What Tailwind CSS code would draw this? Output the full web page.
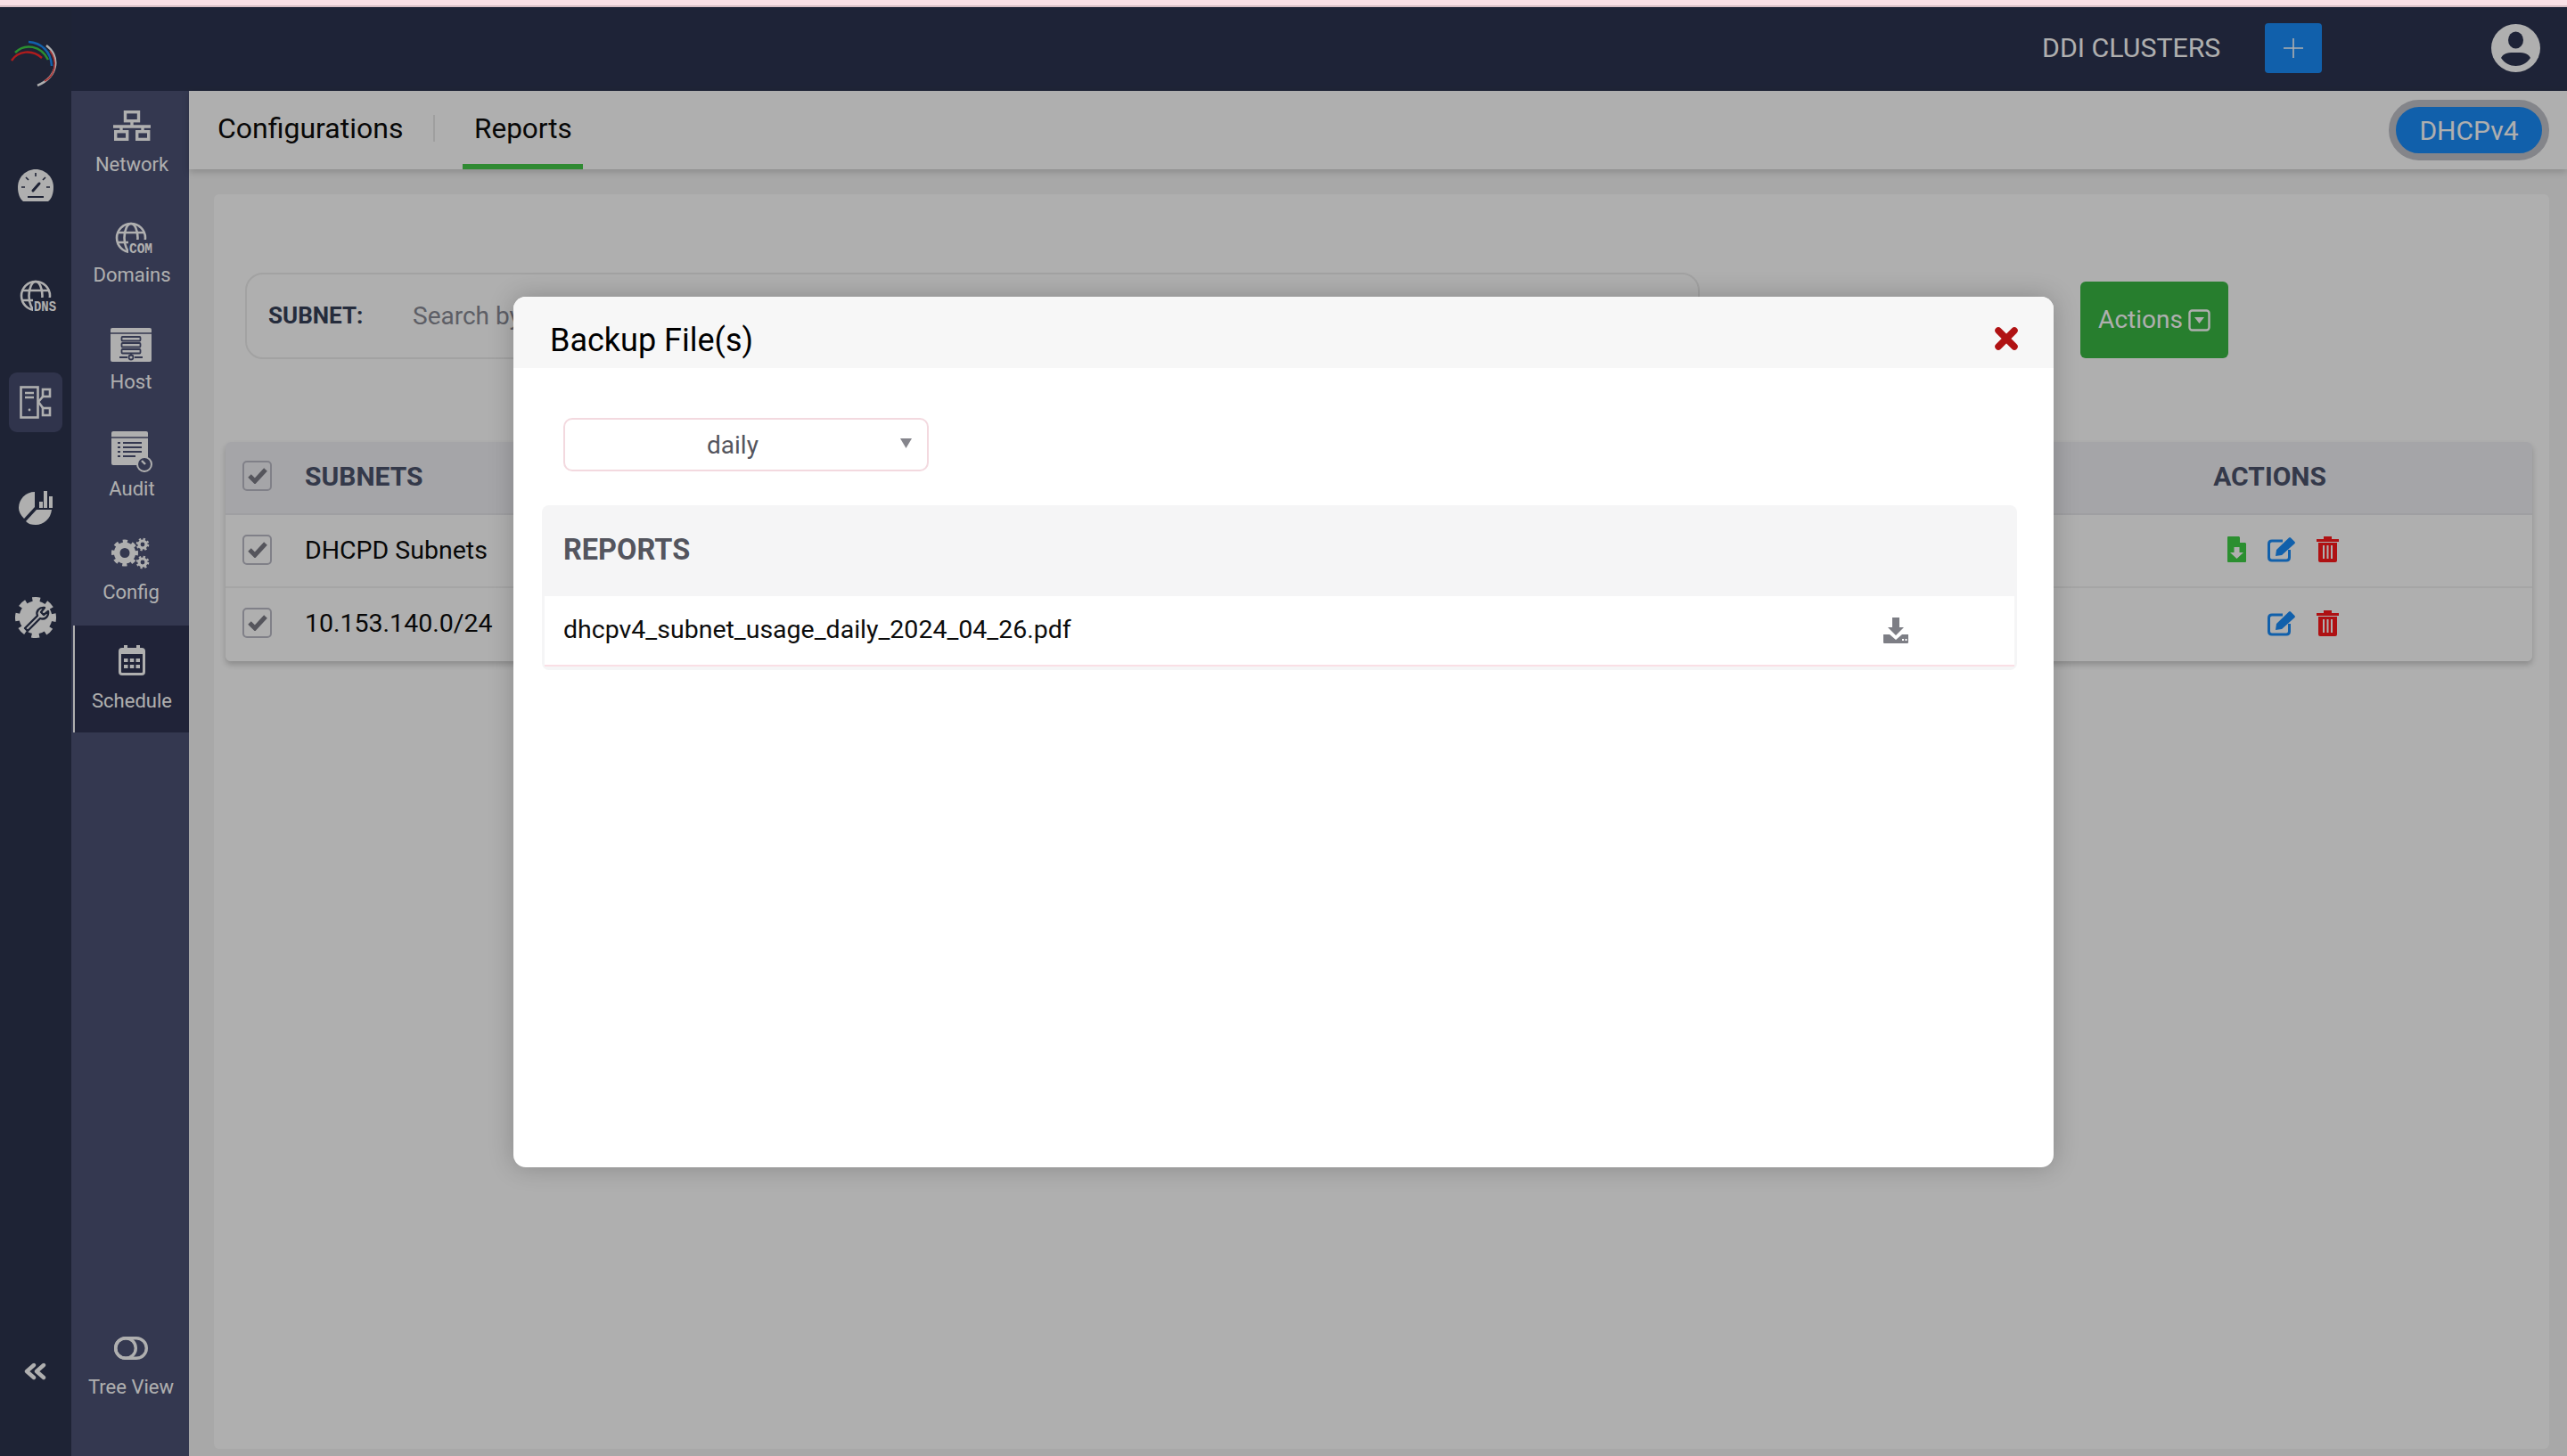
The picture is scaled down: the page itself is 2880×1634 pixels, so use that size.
<!DOCTYPE html>
<html lang="en">
<head>
<meta charset="utf-8">
<title>Backup Files</title>
<script src="https://cdn.jsdelivr.net/npm/@tailwindcss/browser@4"></script>
</head>
<body class="font-['Roboto',sans-serif]">
<div class="relative w-[2880px] h-[1634px] overflow-hidden flex flex-col bg-[#f5f5f5]">
  <div class="h-[8px] shrink-0 bg-[#fae1e6] border-b-2 border-[#d8bfc5]"></div>
  <div class="flex-1 flex min-h-0">
    <!-- Rail -->
    <aside class="w-[80px] shrink-0 bg-[#2c334e] flex flex-col items-center relative">
      <svg class="mt-[37px] ml-[-2px]" width="54" height="52" viewBox="0 0 54 52" fill="none" stroke-width="2.5">
        <path d="M1 23C8 12 24 10 35 20" stroke="#ff2a2a"/>
        <path d="M5 14C16 3 34 6 42 22" stroke="#3fd046"/>
        <path d="M20 2C34 3 45 12 46 29" stroke="#1a8cf9"/>
        <path d="M40 6C55 17 55 40 30 51" stroke="#ffffff"/>
        <path d="M44 12C53 24 50 40 38 46" stroke="#ff4a4a" stroke-width="1.5"/>
      </svg>
      <svg class="mt-[93px]" width="40" height="36" viewBox="0 0 40 36">
        <path d="M6 36C2 33 0 27 0 20 0 9 9 0 20 0s20 9 20 20c0 7-2 13-6 16z" fill="#fff"/>
        <path d="M20 4v4M9 9l3 3M31 9l-3 3M4 20h4M36 20h-4" stroke="#2c334e" stroke-width="1.6"/>
        <path d="M17 24l7-8" stroke="#2c334e" stroke-width="3" stroke-linecap="round"/>
        <path d="M11 31h18" stroke="#2c334e" stroke-width="2"/>
      </svg>
      <svg class="mt-[88px] ml-[12px]" width="48" height="42" viewBox="0 0 48 42" fill="none">
        <g stroke="#fff" stroke-width="2.6"><circle cx="18" cy="18" r="16"/><ellipse cx="18" cy="18" rx="7.5" ry="16"/><path d="M3 12h30M3 23h30"/></g>
        <rect x="15" y="20" width="29" height="16" fill="#2c334e"/>
        <text x="16" y="35" font-family="'Liberation Mono',monospace" font-weight="700" font-size="17" textLength="25" lengthAdjust="spacingAndGlyphs" fill="#fff">DNS</text>
      </svg>
      <div class="mt-[62px] w-[60px] h-[67px] rounded-[9px] bg-[#464c6f] flex items-center justify-center">
        <svg width="36" height="37" viewBox="0 0 36 37" fill="none" stroke="#fff" stroke-width="2.6">
          <rect x="1.5" y="1.5" width="19" height="34"/>
          <path d="M6 8h10M6 13h10" stroke-width="2.4"/>
          <circle cx="11" cy="27" r="1.4" fill="#fff" stroke="none"/>
          <rect x="26" y="4" width="8" height="8"/>
          <rect x="26" y="25" width="8" height="8"/>
          <path d="M21 18l6-7M21 18l6 8"/>
        </svg>
      </div>
      <svg class="mt-[66px]" width="38" height="38" viewBox="0 0 38 38">
        <path d="M18 1v17L6 31C2 27 0 23 0 19 0 9 8 1 18 1z" fill="#fff"/>
        <path d="M20 21h17c-1 10-9 17-18 17-5 0-8-1-11-4z" fill="#fff"/>
        <path d="M23 12h4v7h-4zM28 0h4v19h-4zM34 6h4v13h-4z" fill="#fff"/>
      </svg>
      <svg class="mt-[81px]" width="46" height="46" viewBox="0 0 46 46">
        <circle cx="23" cy="23" r="18.5" fill="#fff"/>
        <circle cx="23" cy="23" r="20" fill="none" stroke="#fff" stroke-width="6" stroke-dasharray="8.4 7.3" transform="rotate(-11.8 23 23)"/>
        <path d="M11 35l14-14c-2-5 2-10 8-9l-4 5 3 3 5-4c1 6-4 10-9 8L14 38z" fill="none" stroke="#2c334e" stroke-width="2.4" stroke-linejoin="round"/>
      </svg>
      <svg class="absolute left-[27px] top-[1521px]" width="25" height="20" viewBox="0 0 25 20" fill="none" stroke="#fff" stroke-width="4.4" stroke-linecap="round" stroke-linejoin="round">
        <path d="M11 3L3 10l8 7M22 3l-8 7 8 7"/>
      </svg>
    </aside>
    <div class="flex-1 min-w-0 flex flex-col">
      <!-- Header -->
      <header class="h-[94px] shrink-0 bg-[#2d3450] flex items-center text-white">
        <span class="ml-[2211px] mt-[-2px] w-[199px] text-[30.3px] leading-[40px] whitespace-nowrap">DDI CLUSTERS</span>
        <button class="ml-[51px] w-[64px] h-[56px] rounded-[4px] bg-[#1a8cf9] flex items-center justify-center mt-[-2px]">
          <svg width="22" height="22" viewBox="0 0 22 22" stroke="#fff" stroke-width="1.6"><path d="M11 0v22M0 11h22"/></svg>
        </button>
        <svg class="ml-[190px] mt-[-2px]" width="55" height="54" viewBox="0 0 55 54">
          <ellipse cx="27.5" cy="27" rx="27.5" ry="27" fill="#fff"/>
          <ellipse cx="27.5" cy="18" rx="8.5" ry="9.5" fill="#2d3450"/>
          <path d="M11 38c3-6 9-6 16.5-6S41 32 44 38c-4 6-10 9-16.5 9S15 44 11 38z" fill="#2d3450"/>
        </svg>
      </header>
      <div class="flex-1 flex min-h-0">
        <!-- Sidebar -->
        <nav class="w-[132px] shrink-0 bg-[#4c5275] flex flex-col text-white text-[22px] leading-[28px]">
          <a class="h-[130px] pt-[22px] pl-[4px] flex flex-col items-center">
            <svg width="42" height="34" viewBox="0 0 42 34" fill="none" stroke="#fff" stroke-width="3.4">
              <rect x="13.5" y="1.7" width="15" height="10"/>
              <path d="M21 12v6M0 18h42M9 18v5M33 18v5"/>
              <rect x="2.7" y="23.7" width="13" height="8.7"/>
              <rect x="26.7" y="23.7" width="13" height="8.7"/>
            </svg>
            <span class="mt-[13px]">Network</span>
          </a>
          <a class="h-[120px] pt-[17px] pl-[4px] flex flex-col items-center">
            <svg class="ml-[10px]" width="48" height="42" viewBox="0 0 48 42" fill="none">
              <g stroke="#fff" stroke-width="2.6"><circle cx="18" cy="18" r="16"/><ellipse cx="18" cy="18" rx="7.5" ry="16"/><path d="M3 12h30M3 23h30"/></g>
              <rect x="15" y="20" width="29" height="16" fill="#4c5275"/>
              <text x="16" y="35" font-family="'Liberation Mono',monospace" font-weight="700" font-size="17" textLength="26" lengthAdjust="spacingAndGlyphs" fill="#fff">COM</text>
            </svg>
            <span class="mt-[4px]">Domains</span>
          </a>
          <a class="h-[118px] pt-[16px] pl-[4px] flex flex-col items-center">
            <svg class="ml-[-2px]" width="46" height="38" viewBox="0 0 46 38">
              <rect width="46" height="38" rx="2" fill="#fff"/>
              <path d="M0 6h46" stroke="#4c5275" stroke-width="1.6"/>
              <g fill="none" stroke="#4c5275" stroke-width="1.8">
                <rect x="12.5" y="10" width="21" height="4.5" rx="1"/>
                <rect x="12.5" y="17" width="21" height="4.5" rx="1"/>
                <rect x="12.5" y="24" width="21" height="4.5" rx="1"/>
                <path d="M23 28.5v3M10 33h9M27 33h9"/>
                <circle cx="23" cy="33" r="2.5"/>
              </g>
            </svg>
            <span class="mt-[9px] ml-[-2px]">Host</span>
          </a>
          <a class="h-[115px] pt-[14px] pl-[4px] flex flex-col items-center">
            <svg width="46" height="46" viewBox="0 0 46 46">
              <rect width="41" height="38" rx="2" fill="#fff"/>
              <path d="M0 7h41" stroke="#4c5275" stroke-width="1.6"/>
              <path d="M7 13h3M13 13h21M7 18h3M13 18h21M7 23h3M13 23h21M7 28h3M13 28h14" stroke="#4c5275" stroke-width="1.8"/>
              <circle cx="37" cy="37" r="8" fill="#4c5275" stroke="#fff" stroke-width="2"/>
              <path d="M34 33l4 4" stroke="#fff" stroke-width="2.4"/>
            </svg>
            <span class="mt-[5px]">Audit</span>
          </a>
          <a class="h-[117px] pt-[18px] pl-[4px] flex flex-col items-center">
            <svg class="ml-[-3px]" width="43" height="36" viewBox="0 0 43 36">
              <circle cx="15" cy="17.5" r="8.8" fill="none" stroke="#fff" stroke-width="6.6"/>
              <circle cx="15" cy="17.5" r="13" fill="none" stroke="#fff" stroke-width="4" stroke-dasharray="5.1 5.1" transform="rotate(-11 15 17.5)"/>
              <circle cx="35" cy="8" r="4" fill="none" stroke="#fff" stroke-width="3.2"/>
              <circle cx="35" cy="8" r="6" fill="none" stroke="#fff" stroke-width="2.6" stroke-dasharray="2.3 2.4"/>
              <circle cx="35" cy="28" r="4" fill="none" stroke="#fff" stroke-width="3.2"/>
              <circle cx="35" cy="28" r="6" fill="none" stroke="#fff" stroke-width="2.6" stroke-dasharray="2.3 2.4"/>
            </svg>
            <span class="mt-[12px] ml-[-2px]">Config</span>
          </a>
          <a class="h-[120px] ml-[2px] pt-[22px] flex flex-col items-center bg-[#2f3452] border-l-2 border-white">
            <svg width="30" height="34" viewBox="0 0 30 34">
              <rect x="1.5" y="4.5" width="27" height="28" rx="2.5" fill="none" stroke="#fff" stroke-width="3"/>
              <path d="M1.5 5h27v5h-27zM6 0h4v6H6zM20 0h4v6h-4z" fill="#fff"/>
              <path d="M6 15h4.5v4H6zM12.8 15h4.5v4h-4.5zM19.5 15H24v4h-4.5zM6 22h4.5v4H6zM12.8 22h4.5v4h-4.5zM19.5 22H24v4h-4.5z" fill="#fff"/>
            </svg>
            <span class="mt-[15px]">Schedule</span>
          </a>
          <a class="mt-auto pb-[63px] pl-[2px] flex flex-col items-center">
            <svg width="38" height="26" viewBox="0 0 38 26" fill="none" stroke="#fff" stroke-width="3.4">
              <rect x="1.7" y="1.7" width="34.6" height="22.6" rx="11.3"/>
              <circle cx="13" cy="13" r="11.3"/>
            </svg>
            <span class="mt-[17px] whitespace-nowrap">Tree View</span>
          </a>
        </nav>
        <!-- Main -->
        <main class="flex-1 min-w-0 flex flex-col">
          <div class="h-[88px] shrink-0 bg-white flex items-center shadow-[0_3px_8px_rgba(0,0,0,0.18)] relative text-[#0c0c0c] text-[32px]">
            <span class="ml-[32px] mt-[-5px]">Configurations</span>
            <span class="ml-[34px] w-[2px] h-[30px] bg-[#e8e8e8] mt-[-5px]"></span>
            <div class="ml-[31px] w-[135px] h-full border-b-[6px] border-[#45c94a] flex items-center justify-center"><span class="mt-[4px] text-[31.5px]">Reports</span></div>
            <div class="ml-auto mr-[20px] w-[180px] h-[68px] rounded-full border-8 border-[#c0c2c9] bg-[#1a8cf9] flex items-center justify-center text-white text-[30px]">DHCPv4</div>
          </div>
          <div class="flex-1 min-h-0 pt-[28px] pl-[28px] pr-[20px] pb-[8px]">
            <div class="h-full bg-white rounded-[6px] pt-[88px]">
              <div class="flex items-start pl-[35px]">
                <div class="w-[1632px] h-[97px] rounded-[20px] border-2 border-[#ececec] flex items-center pl-[24px]">
                  <span class="w-[162px] text-[26px] font-bold text-[#364058]">SUBNET:</span>
                  <span class="text-[28px] text-[#888a94]">Search by</span>
                </div>
                <button class="ml-[427px] mt-[10px] w-[166px] h-[86px] rounded-[6px] bg-[#3ab843] text-white text-[28px] flex items-center justify-center gap-[6px]">
                  Actions
                  <svg width="25" height="25" viewBox="0 0 25 25" fill="none"><rect x="1.5" y="1.5" width="22" height="22" rx="3" stroke="#fff" stroke-width="2.4"/><path d="M7 9h11l-5.5 7z" fill="#fff"/></svg>
                </button>
              </div>
              <div class="mt-[93px] ml-[13px] mr-[19px] rounded-[6px] shadow-[0_4px_6px_rgba(0,0,0,0.2)]">
                <div class="h-[82px] bg-[#f0f0f5] rounded-t-[6px] border-b-2 border-[#e8e8ec] flex items-center pl-[19px] pr-[231px] justify-between">
                  <div class="flex items-center text-[#4d546d] font-bold text-[30px]">
                    <span class="mt-[-4px] w-[33px] h-[34px] rounded-[5px] border-2 border-[#bbbbc6] flex items-center justify-center">
                      <svg width="22" height="18" viewBox="0 0 22 18" fill="none" stroke="#7c7c86" stroke-width="5"><path d="M2 9l6 6L20 2"/></svg>
                    </span>
                    <span class="ml-[37px] mt-[-3px]">SUBNETS</span>
                  </div>
                  <span class="text-[#4d546d] font-bold text-[30px] mt-[-3px]">ACTIONS</span>
                </div>
                <div class="h-[82px] bg-white border-b-2 border-[#f0f0f0] flex items-center justify-between pl-[19px] pr-[217px]">
                  <div class="flex items-center text-[#0c0c0c] text-[28.5px]">
                    <span class="mt-[-3px] w-[33px] h-[34px] rounded-[5px] border-2 border-[#bbbbc6] flex items-center justify-center">
                      <svg width="22" height="18" viewBox="0 0 22 18" fill="none" stroke="#7c7c86" stroke-width="5"><path d="M2 9l6 6L20 2"/></svg>
                    </span>
                    <span class="ml-[37px]">DHCPD Subnets</span>
                  </div>
                  <div class="flex items-center mt-[-3px]">
                    <svg width="21" height="29" viewBox="0 0 21 29"><path d="M0 1q0-1 1-1h12l8 8v20q0 1-1 1H1q-1 0-1-1z" fill="#3fd046"/><path d="M14 0l7 7h-7z" fill="#fff"/><path d="M7.5 12h6v6H18l-7.5 7L3 18h4.5z" fill="#fff"/></svg>
                    <svg class="ml-[24px]" width="32" height="29" viewBox="0 0 32 29"><path d="M17 5H5q-3.5 0-3.5 3.5v15Q1.5 27 5 27h16q3.5 0 3.5-3.5V15" fill="none" stroke="#1a8cf9" stroke-width="3"/><path d="M9 22l1-7L24 1.5q1-1 2 0l4.5 4.500q1 1 0 2L16 21z" fill="#1a8cf9"/></svg>
                    <svg class="ml-[23px]" width="25" height="29" viewBox="0 0 25 29"><path d="M0 3h8V0h9v3h8v3H0z" fill="#ff1a1c"/><path d="M2 7h21v20q0 2-2 2H4q-2 0-2-2zM7 10v15h2V10zM11.5 10v15h2V10zM16 10v15h2V10z" fill="#ff1a1c" fill-rule="evenodd"/></svg>
                  </div>
                </div>
                <div class="h-[82px] bg-white rounded-b-[6px] flex items-center justify-between pl-[19px] pr-[217px]">
                  <div class="flex items-center text-[#0c0c0c] text-[28.5px]">
                    <span class="mt-[-4px] w-[33px] h-[34px] rounded-[5px] border-2 border-[#bbbbc6] flex items-center justify-center">
                      <svg width="22" height="18" viewBox="0 0 22 18" fill="none" stroke="#7c7c86" stroke-width="5"><path d="M2 9l6 6L20 2"/></svg>
                    </span>
                    <span class="ml-[37px] mt-[-1px]">10.153.140.0/24</span>
                  </div>
                  <div class="flex items-center mt-[-4px]">
                    <svg width="32" height="29" viewBox="0 0 32 29"><path d="M17 5H5q-3.5 0-3.5 3.5v15Q1.5 27 5 27h16q3.5 0 3.5-3.5V15" fill="none" stroke="#1a8cf9" stroke-width="3"/><path d="M9 22l1-7L24 1.5q1-1 2 0l4.5 4.500q1 1 0 2L16 21z" fill="#1a8cf9"/></svg>
                    <svg class="ml-[23px]" width="25" height="29" viewBox="0 0 25 29"><path d="M0 3h8V0h9v3h8v3H0z" fill="#ff1a1c"/><path d="M2 7h21v20q0 2-2 2H4q-2 0-2-2zM7 10v15h2V10zM11.5 10v15h2V10zM16 10v15h2V10z" fill="#ff1a1c" fill-rule="evenodd"/></svg>
                  </div>
                </div>
              </div>
            </div>
          </div>
        </main>
      </div>
    </div>
  </div>
  <!-- Backdrop -->
  <div class="absolute left-0 right-0 top-[8px] bottom-0 bg-black/[0.314]"></div>
  <!-- Modal -->
  <div class="absolute left-[576px] top-[333px] w-[1728px] h-[977px] bg-white rounded-[14px] shadow-[0_0_28px_rgba(0,0,0,0.22)]">
    <div class="h-[80px] bg-[#f7f7f7] rounded-t-[14px] flex items-center justify-between pl-[41px] pr-[40px]">
      <span class="text-[36px] text-black mt-[17px] leading-[48px]">Backup File(s)</span>
      <svg class="mt-[14px]" width="26" height="26" viewBox="0 0 26 26" stroke="#b01213" stroke-width="7.5" stroke-linecap="round"><path d="M4 4l18 18M22 4L4 22"/></svg>
    </div>
    <div class="pt-[56px]">
      <div class="relative ml-[56px] w-[410px] h-[60px] rounded-[10px] border-2 border-[#f3d9df] flex items-center pl-[159px] text-[28px] text-[#54555e]">
        <span class="mt-[1px]">daily</span>
        <svg class="absolute right-[17px] top-[21px]" width="13" height="11" viewBox="0 0 13 11"><path d="M0 0h13L6.5 11z" fill="#85858c"/></svg>
      </div>
      <div class="mt-[38px] ml-[32px] w-[1655px] bg-[#f5f5f6] rounded-[8px] pb-[4px]">
        <div class="h-[102px] flex items-center pl-[24px] text-[32.5px] font-bold text-[#54555e]"><span class="mt-[-1px]">REPORTS</span></div>
        <div class="h-[79px] mx-[3px] bg-white border-b-2 border-[#fadfe5] flex items-center pl-[21px] text-[28.5px] text-[#0c0c0c]">
          <span class="w-[1481px]">dhcpv4_subnet_usage_daily_2024_04_26.pdf</span>
          <svg width="28" height="29" viewBox="0 0 28 29"><path d="M10 0h8v11h5l-9 9-9-9h5z" fill="#7d7e85"/><path d="M0 19h7l7 6 7-6h7v9q0 1-1 1H1q-1 0-1-1z" fill="#7d7e85"/><path d="M21 24h2v2h-2zM24.5 24h2v2h-2z" fill="#fff"/></svg>
        </div>
      </div>
    </div>
  </div>
</div>
</body>
</html>
